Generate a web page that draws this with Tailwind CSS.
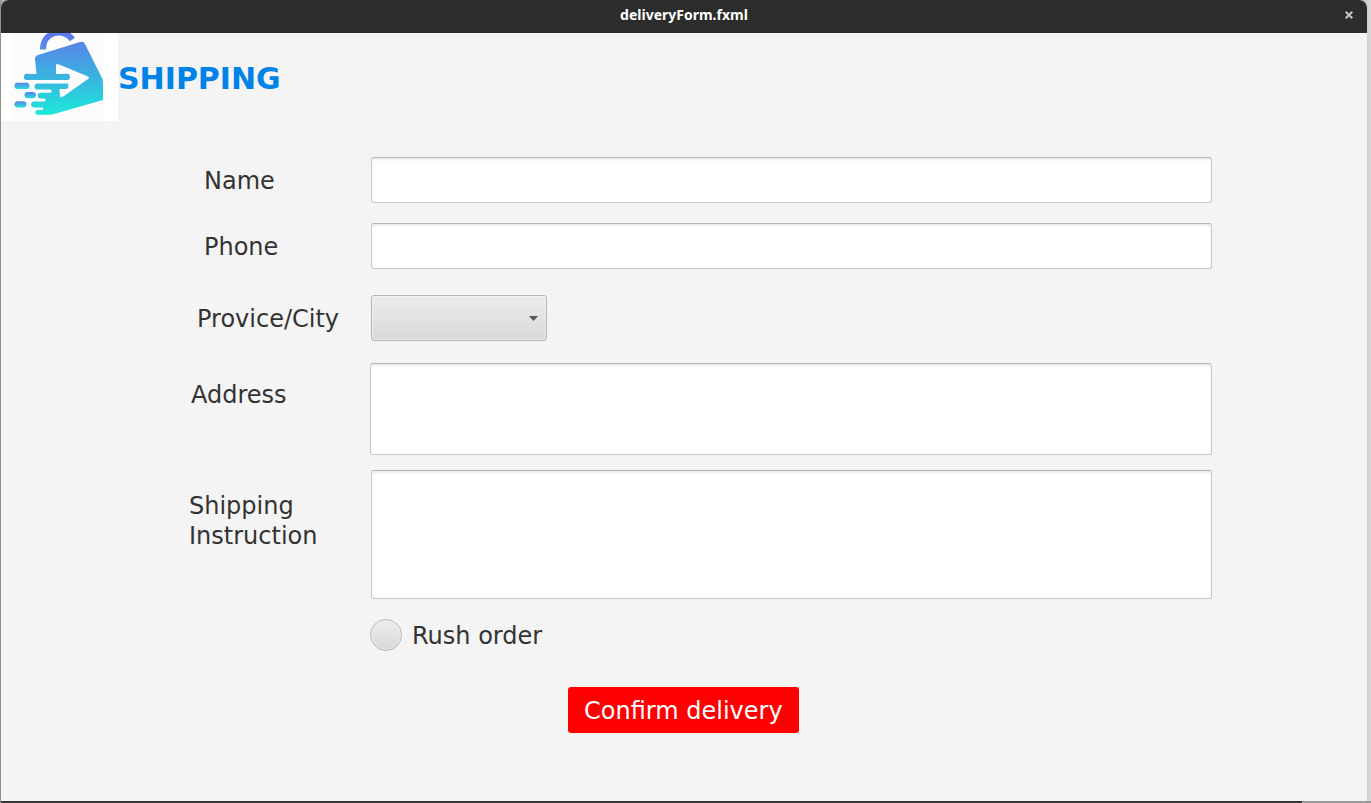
<!DOCTYPE html>
<html lang="en">
<head>
<meta charset="utf-8">
<title>deliveryForm.fxml</title>
<script src="https://cdn.jsdelivr.net/npm/@tailwindcss/browser@4"></script>
</head>
<body class="flex min-h-screen flex-col border-l border-[#8f8f8f] bg-linear-to-r from-[#383637] from-95% to-[#9a9a9a] to-95% font-['DejaVu_Sans',sans-serif] text-2xl/[30px] text-[#333333]">
<div class="flex grow border-b-2 border-transparent bg-linear-to-r from-[#a8a8a8] from-99% to-[#dcdcdc] bg-clip-padding">
  <div class="mr-1 flex grow flex-col rounded-t-lg bg-[#f4f4f4]">
    <header class="grid h-[33px] grid-cols-[1fr_auto_1fr] items-center rounded-t-lg bg-[#2c2c2c] pb-1">
      <h1 class="col-start-2 font-['Noto_Sans',sans-serif] text-sm font-bold text-white">deliveryForm.fxml</h1>
      <button type="button" aria-label="Close" class="mr-3.5 justify-self-end">
        <svg class="block h-2 w-2" viewBox="0 0 8 8" fill="none" stroke="#c4c4c4" stroke-width="2"><path d="M.7.7l6.6 6.6M7.3.7L.7 7.3"/></svg>
      </button>
    </header>
    <div class="flex items-center">
      <svg class="h-[88px] w-[117px] shrink-0" viewBox="1 33 117 88" aria-hidden="true">
        <defs>
          <linearGradient id="bag" gradientUnits="userSpaceOnUse" x1="0" y1="34" x2="0" y2="115"><stop offset="0" stop-color="#5c78ee"/><stop offset=".15" stop-color="#538be6"/><stop offset=".55" stop-color="#39b5e0"/><stop offset="1" stop-color="#1de9da"/></linearGradient>
          <linearGradient id="dash" x1="0" y1="0" x2="0" y2="1"><stop offset="0" stop-color="#5c7fec"/><stop offset="1" stop-color="#22dfdc"/></linearGradient>
        </defs>
        <path fill="#fff" d="M1 33h117v88H1z"/>
        <path fill="#fcfcfc" d="M10 33h93v88H10z"/>
        <path d="M43 49.500C43 31 64 27.500 72.500 39.500" fill="none" stroke="url(#bag)" stroke-width="6"/>
        <path fill="url(#bag)" d="M36.500 74L35 59.500Q34.700 56 38 55L80 42Q83.500 41 85 44L102 78Q103 80 103 83V100L54 114Q52 114.700 50 114.700H37.500a2.300 2.300 0 0 1 0-4.600H42a1.300 1.300 0 0 0 0-2.700H34a2.900 2.900 0 0 1 0-5.800H44a1.500 1.500 0 0 0 0-3.100H40a2.900 2.900 0 0 1 0-5.700H50a1.300 1.300 0 0 0 0-3.200H37.500a3 3 0 0 1 0-6H67V80H27a3.100 3.100 0 0 1 0-6.200z"/>
        <path fill="#fcfcfc" d="M56 74V65.500Q56 63.300 59 64.500L88 76.500Q90 77.700 88 79L64 96Q60 98.500 60 95.500L59.500 89H65.500a3 3 0 0 0 0-6H45V80H67a3.100 3.100 0 0 0 0-6.200z"/>
        <g fill="url(#dash)">
          <rect x="14.500" y="82.800" width="15" height="6.200" rx="3.100"/>
          <rect x="24.500" y="92" width="11.500" height="6.200" rx="3.100"/>
          <rect x="14.500" y="101.200" width="12" height="6.200" rx="3.100"/>
        </g>
      </svg>
      <h2 class="pt-1 text-3xl font-bold text-[#0083e7]">SHIPPING</h2>
    </div>
    <form class="flex flex-col pt-9 pr-[155px] pl-[188px]">
      <div class="flex items-center">
        <label for="name" class="w-[182px] shrink-0 pt-0.5 pl-[15px]">Name</label>
        <input id="name" type="text" class="h-[46px] min-w-0 grow rounded-[3px] border border-[#c8c8c8] border-t-[#b5b5b5] bg-white px-3 shadow-[inset_0_2px_2px_#ececec] outline-none">
      </div>
      <div class="mt-5 flex items-center">
        <label for="phone" class="w-[182px] shrink-0 pt-0.5 pl-[15px]">Phone</label>
        <input id="phone" type="tel" class="h-[46px] min-w-0 grow rounded-[3px] border border-[#c8c8c8] border-t-[#b5b5b5] bg-white px-3 shadow-[inset_0_2px_2px_#ececec] outline-none">
      </div>
      <div class="mt-[26px] flex items-center">
        <label for="city" class="w-[182px] shrink-0 pt-0.5 pl-2">Provice/City</label>
        <div class="grid w-44 items-center">
          <select id="city" class="col-start-1 row-start-1 h-[46px] w-full appearance-none rounded-[3px] border border-[#b5b5b5] bg-linear-to-b from-[#ececec] to-[#d9d9d9] px-3 shadow-[inset_0_0_0_1px_#ffffff66] outline-none"><option></option></select>
          <svg class="pointer-events-none col-start-1 row-start-1 mr-[9px] h-[5px] w-[9px] justify-self-end" viewBox="0 0 9 5" fill="#555"><path d="M0 0h9L4.500 5z"/></svg>
        </div>
      </div>
      <div class="mt-[22px] flex items-start">
        <label for="address" class="w-[181px] shrink-0 pt-[17px] pl-0.5">Address</label>
        <textarea id="address" class="h-[92px] min-w-0 grow resize-none rounded-[3px] border border-[#c8c8c8] border-t-[#b5b5b5] bg-white p-3 shadow-[inset_0_2px_2px_#ececec] outline-none"></textarea>
      </div>
      <div class="mt-[15px] flex items-start">
        <label for="instruction" class="w-[182px] shrink-0 pt-[21px]">Shipping<br>Instruction</label>
        <textarea id="instruction" class="h-[129px] min-w-0 grow resize-none rounded-[3px] border border-[#c8c8c8] border-t-[#b5b5b5] bg-white p-3 shadow-[inset_0_2px_2px_#ececec] outline-none"></textarea>
      </div>
      <div class="mt-5 ml-[181px] flex items-center gap-2.5">
        <input id="rush" type="radio" class="h-8 w-8 appearance-none rounded-full border border-[#b9b9b9] bg-linear-to-b from-[#ececec] to-[#dadada] shadow-[inset_0_0_0_1px_#ffffff66] checked:border-8">
        <label for="rush" class="pt-0.5">Rush order</label>
      </div>
      <button type="submit" class="mt-9 ml-[379px] self-start rounded-[3px] bg-[#ff0000] px-4 pt-[9px] pb-[7px] text-white">Confirm delivery</button>
    </form>
  </div>
</div>
</body>
</html>
